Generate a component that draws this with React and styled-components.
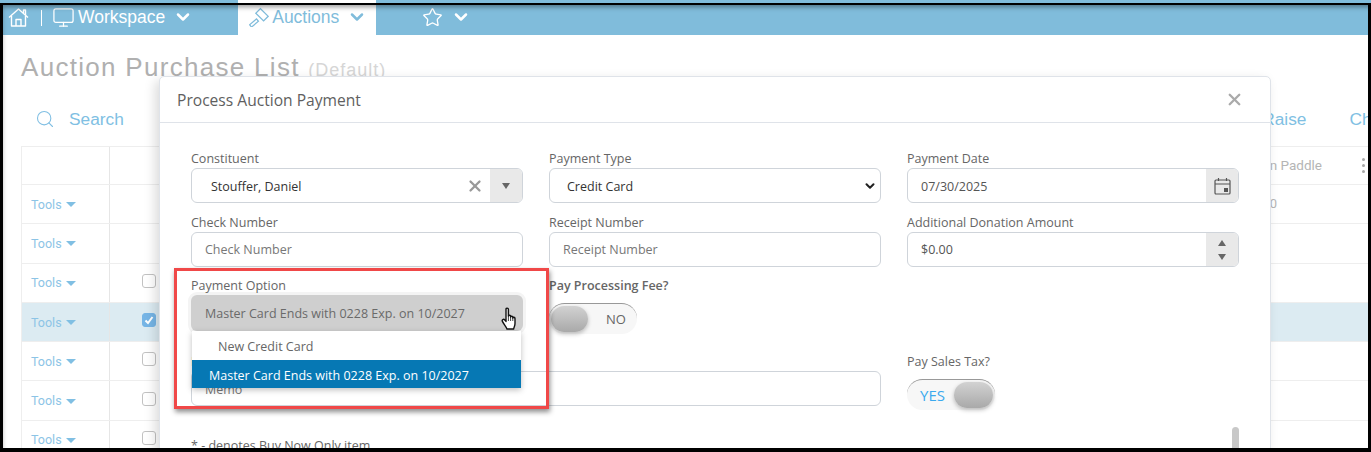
import React from 'react';
import styled, { createGlobalStyle } from 'styled-components';
import { Monitor, Star, ChevronDown, Search as SearchIcon, X } from 'lucide-react';

const GlobalStyle = createGlobalStyle`
  html, body {
    margin: 0;
    background: #ffffff;
  }
  * {
    box-sizing: border-box;
  }
`;

const Page = styled.div`
  position: relative;
  width: 1371px;
  height: 452px;
  overflow: hidden;
  background: #ffffff;
  font-family: 'Open Sans', sans-serif;
`;

const Frame = styled.div`
  position: absolute;
  inset: 3px 0 0 0;
  border: solid #000000;
  border-width: 2px 3px 4px 3px;
  box-shadow: inset 2px 5px 5px -3px rgba(0, 0, 0, 0.4);
  pointer-events: none;
  z-index: 10;
`;

const Nav = styled.nav`
  display: flex;
  align-items: center;
  height: 35px;
  padding: 0 0 1px 8px;
  background: #80bcdb;
  color: #ffffff;
  font-family: 'Liberation Sans', sans-serif;
  font-size: 17.5px;
`;

const NavItem = styled.div`
  display: flex;
  align-items: center;
  gap: ${(p) => p.$gap || 3}px;
  flex: none;
`;

const NavDivider = styled.span`
  width: 1px;
  height: 16px;
  margin: 2px 10px 0 12px;
  background: #ffffff;
`;

const NavTab = styled.div`
  display: flex;
  align-items: center;
  align-self: stretch;
  gap: 3px;
  width: 138px;
  margin: 0 46px -1px 45px;
  padding: 0 0 1px 11px;
  background: #ffffff;
  color: #80bcdb;
`;

const NavLabel = styled.span`
  margin-right: ${(p) => p.$after || 5}px;
`;

const Content = styled.div`
  padding: 15px 0 0 21px;
`;

const Title = styled.h1`
  margin: 0;
  height: 34px;
  color: #b0b0b0;
  font-family: 'Liberation Sans', sans-serif;
  font-size: 26px;
  font-weight: 400;
  letter-spacing: 1.3px;
  line-height: 34px;
`;

const TitleNote = styled.small`
  color: #d6d6d6;
  font-size: 18px;
  letter-spacing: 1px;
`;

const Toolbar = styled.div`
  display: flex;
  align-items: center;
  height: 62px;
  padding: 8px 0 0 14px;
  margin-right: -42px;
  color: #80bfe3;
  font-family: 'Liberation Sans', sans-serif;
  font-size: 17.3px;
`;

const ToolbarRight = styled.div`
  display: flex;
  gap: 43px;
  margin-left: auto;
  margin-right: 3px;
`;

const SearchLabel = styled.span`
  margin-left: 14px;
`;

const Table = styled.div`
  border-top: 1px solid #eeeeee;
`;

const Row = styled.div`
  display: grid;
  grid-template-columns: 89px 1fr 103px 47px;
  align-items: center;
  height: ${(p) => p.$height || 39.3}px;
  border-bottom: 1px solid #eeeeee;
  background: ${(p) => (p.$selected ? '#dcebf2' : 'transparent')};
`;

const ToolsCell = styled.div`
  display: flex;
  align-items: center;
  align-self: stretch;
  gap: 4px;
  padding-left: 9px;
  border-left: 1px solid #eeeeee;
  border-right: 1px solid #e6e6e6;
  color: #8cc4e6;
  font-family: Roboto, sans-serif;
  font-size: 12.5px;
`;

const Caret = styled.i`
  width: 0;
  height: 0;
  margin-top: 1px;
  border: 5px solid transparent;
  border-bottom: 0;
  border-top-color: #80bfe3;
`;

const CheckCell = styled.div`
  display: flex;
  padding: 0 0 4px 32px;
`;

const Check = styled.span`
  display: flex;
  align-items: center;
  justify-content: center;
  width: 14px;
  height: 14px;
  border: 1px solid ${(p) => (p.$checked ? '#76b5e6' : '#c2c2c2')};
  border-radius: 3px;
  background: ${(p) => (p.$checked ? '#76b5e6' : '#ffffff')};
`;

const PaddleCell = styled.div`
  padding: 0 2px 2px 0;
  color: #b5b5b5;
  font-family: Roboto, sans-serif;
  font-size: 13.5px;
  text-align: right;
  white-space: nowrap;
`;

const ValueCell = styled(PaddleCell)`
  padding-right: 47px;
  font-size: 13px;
`;

const DotsCell = styled.div`
  display: flex;
  flex-direction: column;
  gap: 3px;
  padding-left: 38px;
`;

const Dot = styled.i`
  width: 3px;
  height: 3px;
  border-radius: 50%;
  background: #a8a8a8;
`;

const Modal = styled.div`
  position: absolute;
  top: 76px;
  left: 159px;
  width: 1112px;
  height: 420px;
  border: 1px solid #dfe3e9;
  border-radius: 5px;
  background: #ffffff;
  box-shadow: -4px 4px 12px rgba(0, 0, 0, 0.14);
  color: #666666;
`;

const ModalHeader = styled.div`
  display: flex;
  align-items: center;
  justify-content: space-between;
  height: 46px;
  padding: 0 26px 0 17px;
  border-bottom: 1px solid #dfe3e9;
  color: #5f5f5f;
  font-size: 15.6px;
`;

const FormGrid = styled.div`
  display: grid;
  grid-template-columns: repeat(3, 332px);
  grid-template-rows: 55px 54px 67px 80px;
  gap: 9px 26px;
  padding: 25px 0 0 31px;
`;

const Field = styled.div`
  position: relative;
  grid-column: span ${(p) => p.$span || 1};
  min-width: 0;
`;

const Label = styled.label`
  display: block;
  height: 20px;
  padding-top: 1px;
  font-size: 12.5px;
  font-weight: ${(p) => (p.$strong ? 600 : 400)};
  line-height: 20px;
  white-space: nowrap;
`;

const Control = styled.div`
  display: flex;
  align-items: center;
  height: 35px;
  padding: ${(p) => (p.$tight ? 0 : 1)}px 0 0 ${(p) => p.$pad || 13}px;
  border: 1px solid #cfd4da;
  border-radius: 6px;
  overflow: hidden;
  background: #ffffff;
  color: ${(p) => (p.$muted ? '#777777' : p.$dark ? '#333333' : '#555555')};
  font-size: 12.5px;
`;

const ControlText = styled.span`
  flex: 1;
`;

const Addon = styled.div`
  display: flex;
  flex-direction: column;
  align-items: center;
  justify-content: center;
  gap: 8px;
  align-self: stretch;
  width: ${(p) => p.$width || 32}px;
  margin-top: ${(p) => (p.$tight ? 0 : -1)}px;
  background: #e9e9e9;
  color: #555555;
`;

const Triangle = styled.i`
  width: 0;
  height: 0;
  border: 4.5px solid transparent;
  ${(p) => (p.$up ? 'border-top: 0; border-bottom: 6px solid #666666;' : 'border-bottom: 0; border-top: 6px solid #666666;')}
`;

const ClearIcon = styled(X)`
  margin-right: 6px;
  color: #999999;
`;

const SelectChevron = styled(ChevronDown)`
  margin-right: 3px;
  color: #222222;
`;

const OpenSelect = styled.div`
  display: flex;
  align-items: center;
  height: 36px;
  padding-left: 14px;
  border-radius: 6px;
  background: #cfcfcf;
  box-shadow: 0 0 0 3px #f4f4f4;
  color: #6a6a6a;
  font-size: 12.5px;
`;

const Dropdown = styled.ul`
  position: absolute;
  top: 56px;
  left: 1px;
  width: 329px;
  margin: 0;
  padding: 0;
  list-style: none;
  background: #ffffff;
  box-shadow: 0 2px 6px rgba(0, 0, 0, 0.25);
  font-size: 12.5px;
  z-index: 2;
`;

const DropdownItem = styled.li`
  height: 28.5px;
  padding: 1px 0 0 ${(p) => (p.$active ? 17 : 26)}px;
  background: ${(p) => (p.$active ? '#0678b4' : '#ffffff')};
  color: ${(p) => (p.$active ? '#ffffff' : '#666666')};
  line-height: 29px;
`;

const Toggle = styled.div`
  display: flex;
  align-items: center;
  justify-content: ${(p) => (p.$on ? 'flex-end' : 'flex-start')};
  gap: ${(p) => (p.$on ? 9 : 18)}px;
  width: 88px;
  height: 31px;
  margin-top: 8px;
  padding: 0 2px;
  border-top: 1px solid #999999;
  border-radius: 16px;
  background: #f7f7f7;
  color: ${(p) => (p.$on ? '#3aa9ee' : '#666666')};
  font-size: ${(p) => (p.$on ? 15 : 13)}px;
`;

const Knob = styled.span`
  width: ${(p) => (p.$on ? 39 : 37)}px;
  height: 26px;
  border-radius: 13px;
  background: linear-gradient(#d2d2d2, #a9a9a9);
  box-shadow: 0 2px 4px rgba(0, 0, 0, 0.25);
`;

const Note = styled.p`
  margin: 6px 0 0 31px;
  font-size: 12.5px;
`;

const ScrollThumb = styled.div`
  position: absolute;
  top: 350px;
  right: 31px;
  width: 7px;
  height: 60px;
  border-radius: 4px;
  background: #c8c8c8;
`;

const Highlight = styled.div`
  position: absolute;
  top: 268px;
  left: 174px;
  width: 375px;
  height: 141px;
  border: 3px solid #f04848;
  box-shadow: 1px 3px 5px rgba(0, 0, 0, 0.45);
  pointer-events: none;
  z-index: 3;
`;

const Cursor = styled.svg`
  position: absolute;
  top: 306px;
  left: 501px;
  z-index: 4;
`;

const HomeIcon = () => (
  <svg width="21" height="19" viewBox="0 0 21 19" fill="none" stroke="currentColor" strokeWidth="1.4" strokeLinejoin="round">
    <path d="M1 9.5 L10.5 1 L20 9.5" />
    <path d="M15.5 5 V2 H17.5 V7" />
    <path d="M3.5 8 V18 H17.5 V8" />
    <path d="M8 18 V11.5 H13 V18" />
  </svg>
);

const GavelIcon = () => (
  <svg width="20" height="20" viewBox="0 0 20 20" fill="none" stroke="currentColor" strokeWidth="1.3">
    <rect x="7.5" y="4.5" width="11" height="6.5" transform="rotate(45 13 7.75)" />
    <rect x="0.5" y="14.5" width="9" height="3" transform="rotate(-40 5 16)" />
  </svg>
);

const rows = [
  { id: 1, value: '0' },
  { id: 2 },
  { id: 3, check: true },
  { id: 4, check: true, checked: true, selected: true },
  { id: 5, check: true },
  { id: 6, check: true },
  { id: 7, check: true },
];

export default function App() {
  return (
    <Page>
      <GlobalStyle />
      <Nav>
        <HomeIcon />
        <NavDivider />
        <NavItem>
          <Monitor size={23} strokeWidth={1.3} />
          <NavLabel>Workspace</NavLabel>
          <ChevronDown size={20} strokeWidth={3} />
        </NavItem>
        <NavTab>
          <GavelIcon />
          <NavLabel>Auctions</NavLabel>
          <ChevronDown size={20} strokeWidth={3} />
        </NavTab>
        <NavItem $gap={8}>
          <Star size={21} strokeWidth={1.5} />
          <ChevronDown size={20} strokeWidth={3} />
        </NavItem>
      </Nav>

      <Content>
        <Title>
          Auction Purchase List <TitleNote>(Default)</TitleNote>
        </Title>
        <Toolbar>
          <SearchIcon size={20} strokeWidth={1.3} />
          <SearchLabel>Search</SearchLabel>
          <ToolbarRight>
            <span>Raise</span>
            <span>Change</span>
          </ToolbarRight>
        </Toolbar>
        <Table>
          <Row $height={38}>
            <ToolsCell />
            <div />
            <PaddleCell>Min Paddle</PaddleCell>
            <DotsCell>
              <Dot />
              <Dot />
              <Dot />
            </DotsCell>
          </Row>
          {rows.map((row) => (
            <Row key={row.id} $selected={row.selected}>
              <ToolsCell>
                Tools <Caret />
              </ToolsCell>
              <CheckCell>
                {row.check && (
                  <Check $checked={row.checked}>
                    {row.checked && (
                      <svg width="10" height="10" viewBox="0 0 10 10">
                        <path d="M1.5 5.5 L4 8 L8.5 2" fill="none" stroke="#ffffff" strokeWidth="2" />
                      </svg>
                    )}
                  </Check>
                )}
              </CheckCell>
              <ValueCell>{row.value}</ValueCell>
              <div />
            </Row>
          ))}
        </Table>
      </Content>

      <Modal>
        <ModalHeader>
          Process Auction Payment
          <X size={19} strokeWidth={3} color="#aaaaaa" />
        </ModalHeader>
        <FormGrid>
          <Field>
            <Label>Constituent</Label>
            <Control $pad={19} $dark>
              <ControlText>Stouffer, Daniel</ControlText>
              <ClearIcon size={18} strokeWidth={3} />
              <Addon>
                <Triangle />
              </Addon>
            </Control>
          </Field>
          <Field>
            <Label>Payment Type</Label>
            <Control $pad={17} $dark>
              <ControlText>Credit Card</ControlText>
              <SelectChevron size={14} strokeWidth={3.5} />
            </Control>
          </Field>
          <Field>
            <Label>Payment Date</Label>
            <Control>
              <ControlText>07/30/2025</ControlText>
              <Addon>
                <svg width="17" height="18" viewBox="0 0 17 18" fill="none" stroke="#555555" strokeWidth="1.2">
                  <rect x="1" y="3" width="15" height="14" rx="1" />
                  <path d="M1 7 H16 M4.5 1 V4 M12.5 1 V4" />
                  <rect x="10" y="11" width="4" height="4" fill="#555555" stroke="none" />
                </svg>
              </Addon>
            </Control>
          </Field>

          <Field>
            <Label>Check Number</Label>
            <Control $muted $tight>Check Number</Control>
          </Field>
          <Field>
            <Label>Receipt Number</Label>
            <Control $muted $tight>Receipt Number</Control>
          </Field>
          <Field>
            <Label>Additional Donation Amount</Label>
            <Control $tight>
              <ControlText>$0.00</ControlText>
              <Addon $tight>
                <Triangle $up />
                <Triangle />
              </Addon>
            </Control>
          </Field>

          <Field>
            <Label>Payment Option</Label>
            <OpenSelect>Master Card Ends with 0228 Exp. on 10/2027</OpenSelect>
            <Dropdown>
              <DropdownItem>New Credit Card</DropdownItem>
              <DropdownItem $active>Master Card Ends with 0228 Exp. on 10/2027</DropdownItem>
            </Dropdown>
          </Field>
          <Field>
            <Label $strong>Pay Processing Fee?</Label>
            <Toggle>
              <Knob />
              NO
            </Toggle>
          </Field>
          <div />

          <Field $span={2}>
            <Label>Memo</Label>
            <Control $muted>Memo</Control>
          </Field>
          <Field>
            <Label>Pay Sales Tax?</Label>
            <Toggle $on>
              YES
              <Knob $on />
            </Toggle>
          </Field>
        </FormGrid>
        <Note>* - denotes Buy Now Only item</Note>
        <ScrollThumb />
      </Modal>

      <Highlight />
      <Cursor width="18" height="26" viewBox="0 0 18 24">
        <path
          d="M5 2.2 C5 0.8 7.4 0.8 7.4 2.2 V9 C7.4 8 9.6 8 9.6 9.3 V10 C9.6 9 11.8 9 11.8 10.3 V11 C11.8 10 14 10 14 11.4 V16.5 C14 19 13 20 12.6 22 H6 C5.4 20 2.6 16.8 1.4 14.4 C0.6 12.8 2.6 11.6 3.8 13 L5 14.4 Z"
          fill="#ffffff"
          stroke="#111111"
          strokeWidth="1.4"
          strokeLinejoin="round"
        />
        <path d="M7.4 9 V14 M9.6 10 V14 M11.8 11 V14" stroke="#111111" strokeWidth="0.8" fill="none" />
      </Cursor>
      <Frame />
    </Page>
  );
}
